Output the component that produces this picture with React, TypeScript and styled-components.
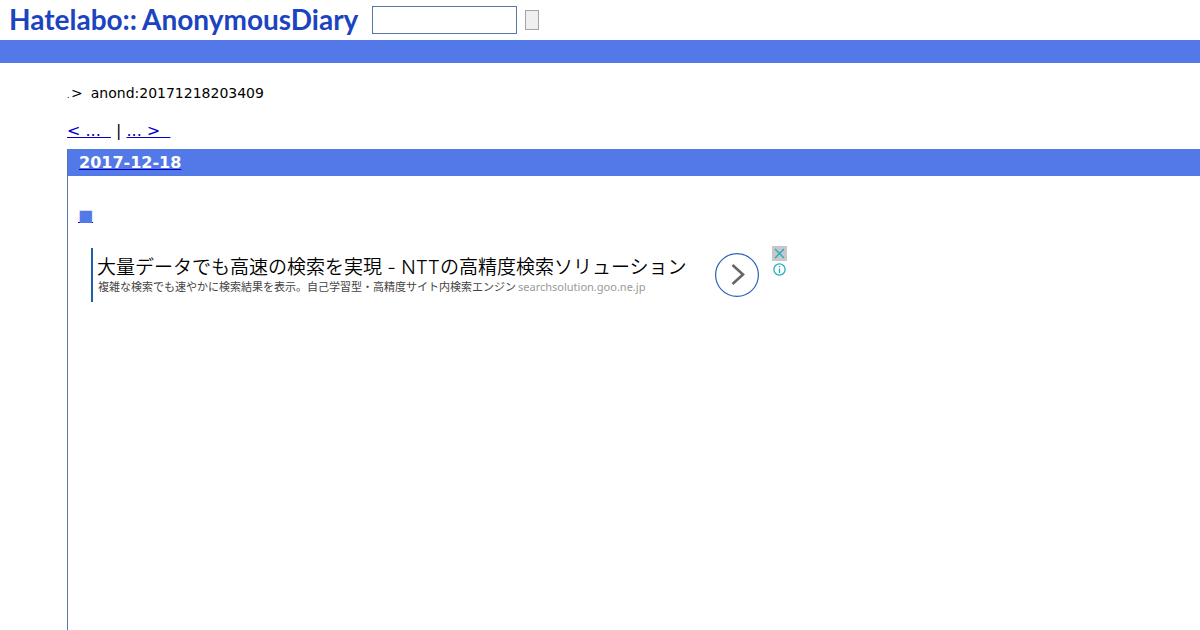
import React from 'react';
import styled, { createGlobalStyle } from 'styled-components';

const GlobalStyle = createGlobalStyle`
  * { box-sizing: border-box; }
  html, body, #root { height: 100%; }
  body {
    margin: 0;
    background: #fff;
    color: #000;
    font-family: "DejaVu Sans", Verdana, sans-serif;
    font-size: 16px;
    line-height: 20px;
  }
`;

const Page = styled.div`
  display: flex;
  flex-direction: column;
  min-height: 100%;
`;

const Header = styled.header`
  display: flex;
  align-items: center;
  height: 40px;
  padding-left: 9px;
`;

const Logo = styled.a`
  display: flex;
  gap: 5px;
  width: 363px;
  padding-bottom: 2px;
  color: #1c43c0;
  font: 700 28px/32px Lato, sans-serif;
  text-decoration: none;
  white-space: nowrap;
`;

const SearchForm = styled.form`
  display: flex;
  align-items: center;
  gap: 8px;
`;

const SearchInput = styled.input`
  width: 145px;
  height: 28px;
  padding: 2px 4px;
  border: 1px solid #5279a8;
  background: #fff;
`;

const SearchButton = styled.button`
  width: 14px;
  height: 20px;
  padding: 0;
  border: 1px solid #a5a5a5;
  background: #efefef;
`;

const Bar = styled.div`
  height: 23px;
  background: #5279e7;
`;

const Main = styled.main`
  display: flex;
  flex: 1;
  flex-direction: column;
  padding: 20px 0 0 67px;
`;

const Breadcrumb = styled.nav`
  display: flex;
  align-items: baseline;
  font-size: 14px;
`;

const Dot = styled.span`
  width: 4px;
  font-size: 8px;
`;

const Current = styled.span`
  margin-left: 8px;
`;

const Pager = styled.nav`
  margin: 15px 0 8px;
  white-space: pre;
`;

const PageLink = styled.a`
  color: #0000cc;
`;

const Day = styled.section`
  flex: 1;
  border-left: 1px solid #5279a8;
`;

const DayTitle = styled.h2`
  margin: 0;
  padding: 4px 11px 3px;
  background: #5279e7;
  font-size: 16px;
  line-height: 20px;
`;

const DayLink = styled.a`
  color: #fff;
  text-decoration-color: #0000cc;
`;

const Entry = styled.article`
  padding: 30px 10px 0;
`;

const EntryMark = styled.a`
  display: block;
  width: 15px;
  color: #5279e7;
  text-decoration-color: #0000aa;
`;

const Ad = styled.aside`
  display: flex;
  align-items: flex-start;
  width: 709px;
  max-width: 100%;
  margin-top: 20px;
  padding-left: 13px;
`;

const AdText = styled.a`
  flex: 1;
  height: 54px;
  margin-top: 2px;
  padding: 7px 0 0 4px;
  border-left: 2px solid #1f5fa8;
  color: #000;
  font-family: "Noto Sans CJK JP", sans-serif;
  text-decoration: none;
  white-space: nowrap;
`;

const AdTitle = styled.div`
  font-size: 19px;
  font-weight: 350;
  line-height: 22px;
`;

const AdLatin = styled.span`
  font-family: Inter, sans-serif;
  font-weight: 300;
`;

const AdBody = styled.div`
  padding-left: 1px;
  color: #444;
  font-size: 11px;
  line-height: 14px;
`;

const AdHost = styled.span`
  margin-left: 2px;
  color: #999;
  font-family: "Noto Sans", sans-serif;
`;

const ArrowButton = styled.button`
  display: flex;
  width: 44px;
  height: 44px;
  margin: 7px 13px 0 0;
  padding: 0;
  border: 0;
  background: none;
`;

const AdControls = styled.div`
  display: flex;
  flex-direction: column;
  gap: 1px;
`;

const IconButton = styled.button<{ $shaded?: boolean }>`
  display: flex;
  width: 15px;
  height: 15px;
  padding: 0;
  border: 0;
  background: ${(p) => (p.$shaded ? '#c8c8c8' : 'transparent')};
`;

export default function App() {
  return (
    <Page>
      <GlobalStyle />
      <Header>
        <Logo href="#"><span>Hatelabo::</span><span>AnonymousDiary</span></Logo>
        <SearchForm onSubmit={(e) => e.preventDefault()}>
          <SearchInput type="text" aria-label="Search" />
          <SearchButton type="submit" aria-label="Submit search" />
        </SearchForm>
      </Header>
      <Bar />
      <Main>
        <Breadcrumb aria-label="Breadcrumb">
          <Dot>.</Dot>
          <span>&gt;</span>
          <Current>anond:20171218203409</Current>
        </Breadcrumb>
        <Pager aria-label="Entries">
          <PageLink href="#">{'< ...\u00a0 '}</PageLink>
          {' | '}
          <PageLink href="#">{'... >\u00a0 '}</PageLink>
        </Pager>
        <Day>
          <DayTitle><DayLink href="#">2017-12-18</DayLink></DayTitle>
          <Entry>
            <EntryMark href="#">■</EntryMark>
            <Ad>
              <AdText href="#">
                <AdTitle>
                  大量データでも高速の検索を実現<AdLatin> - NTT</AdLatin>の高精度検索ソリューション
                </AdTitle>
                <AdBody>
                  複雑な検索でも速やかに検索結果を表示。自己学習型・高精度サイト内検索エンジン
                  <AdHost>searchsolution.goo.ne.jp</AdHost>
                </AdBody>
              </AdText>
              <ArrowButton type="button" aria-label="Open">
                <svg width="44" height="44" viewBox="0 0 44 44" fill="none">
                  <circle cx="22" cy="22" r="21.4" stroke="#2a62b8" strokeWidth="1.2" />
                  <path d="M17.5 12 L28 21.5 L17.5 31" stroke="#666" strokeWidth="2.6" />
                </svg>
              </ArrowButton>
              <AdControls>
                <IconButton type="button" $shaded aria-label="Close">
                  <svg width="15" height="15" viewBox="0 0 15 15" fill="none" stroke="#22a7c9" strokeWidth="1.3">
                    <path d="M3 3 L12 12 M12 3 L3 12" />
                  </svg>
                </IconButton>
                <IconButton type="button" aria-label="Ad information">
                  <svg width="15" height="15" viewBox="0 0 15 15" fill="none" stroke="#1fb0c4" strokeWidth="1.3">
                    <circle cx="7.5" cy="7.5" r="5.6" />
                    <path d="M7.5 6.4 V11 M7.5 3.9 V5.3" />
                  </svg>
                </IconButton>
              </AdControls>
            </Ad>
          </Entry>
        </Day>
      </Main>
    </Page>
  );
}
